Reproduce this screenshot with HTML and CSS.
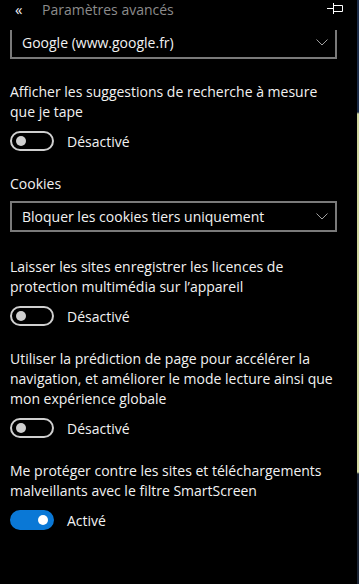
FILE: index.html
```html
<!DOCTYPE html>
<html>
	<head>
		<meta charset="UTF-8">
		<title>Paramètres avancés</title>
		<link rel="stylesheet" href="styles.css">
	</head>
	<body>
		<div class="pane">
			<div class="head">
				<span class="back">«</span>
				<span class="title">Paramètres avancés</span>
				<svg class="pin" width="18" height="12" viewBox="0 0 18 12">
					<path d="M0 6.5H6.5M6.5 1V12M6.5 3.5H15.5V9.5H6.5" fill="none" stroke="#fff" stroke-width="1"/>
				</svg>
			</div>
			<div class="select first">
				<span>Google (www.google.fr)</span>
				<svg class="chev" width="12" height="7" viewBox="0 0 12 7"><path d="M0.5 0.5L6 6L11.5 0.5" fill="none" stroke="#a0a0a0" stroke-width="1"/></svg>
			</div>

			<div class="group">
				<div class="label">Afficher les suggestions de recherche à mesure que je tape</div>
				<div class="toggle">
					<span class="sw"><span class="knob"></span></span>
					<span>Désactivé</span>
				</div>
			</div>

			<div class="group cookies">
				<div class="label">Cookies</div>
				<div class="select">
					<span>Bloquer les cookies tiers uniquement</span>
					<svg class="chev" width="12" height="7" viewBox="0 0 12 7"><path d="M0.5 0.5L6 6L11.5 0.5" fill="none" stroke="#a0a0a0" stroke-width="1"/></svg>
				</div>
			</div>

			<div class="group after-select">
				<div class="label">Laisser les sites enregistrer les licences de protection multimédia sur l’appareil</div>
				<div class="toggle">
					<span class="sw"><span class="knob"></span></span>
					<span>Désactivé</span>
				</div>
			</div>

			<div class="group">
				<div class="label">Utiliser la prédiction de page pour accélérer la navigation, et améliorer le mode lecture ainsi que mon expérience globale</div>
				<div class="toggle">
					<span class="sw"><span class="knob"></span></span>
					<span>Désactivé</span>
				</div>
			</div>

			<div class="group">
				<div class="label">Me protéger contre les sites et téléchargements malveillants avec le filtre SmartScreen</div>
				<div class="toggle">
					<span class="sw on"><span class="knob"></span></span>
					<span>Activé</span>
				</div>
			</div>
		</div>
		<div class="edge"></div>
	</body>
</html>
```
FILE: styles.css
```css
html,body{margin:0; height:100%; background:#000;}
body{display:flex; overflow:hidden; font-family:"Open Sans","Noto Sans",sans-serif; font-size:14px; color:#f2f2f2;}
.pane{width:357px; padding-left:10px; box-sizing:border-box;}
.edge{width:2px; background:linear-gradient(#1b2c48 0,#1b2c48 112px,#d3d9a2 114px,#d3d9a2 472px,#1b2535 474px);}

.head{height:30px; display:flex; align-items:flex-start; position:relative;}
.back{font-size:15px; line-height:19px; margin-left:5px; width:27px;}
.title{color:#8c8c8c; font-size:14px; line-height:19px;}
.pin{position:absolute; left:317px; top:2px;}

.select{width:327px; height:31px; border:2px solid #7a7a7a; box-sizing:border-box;
	display:flex; align-items:center; justify-content:space-between; padding:0 7px 0 10px;}
.select.first{height:29px; border-top:none; padding-bottom:2px;}

.group{margin-top:23px; display:flex; flex-direction:column; gap:9px;}
.group.cookies{gap:7px;}
.group.after-select{margin-top:25px;}
.label{line-height:20px; width:330px;}
.toggle{display:flex; align-items:center; gap:13px; height:20px;}
.sw{width:44px; height:20px; border:2px solid #cfcfcf; border-radius:10px; box-sizing:border-box; position:relative; display:block;}
.knob{position:absolute; left:4px; top:3px; width:10px; height:10px; border-radius:50%; background:#cfcfcf;}
.sw.on{background:#0a78d6; border-color:#0a78d6;}
.sw.on .knob{left:26px; background:#fff;}
```
